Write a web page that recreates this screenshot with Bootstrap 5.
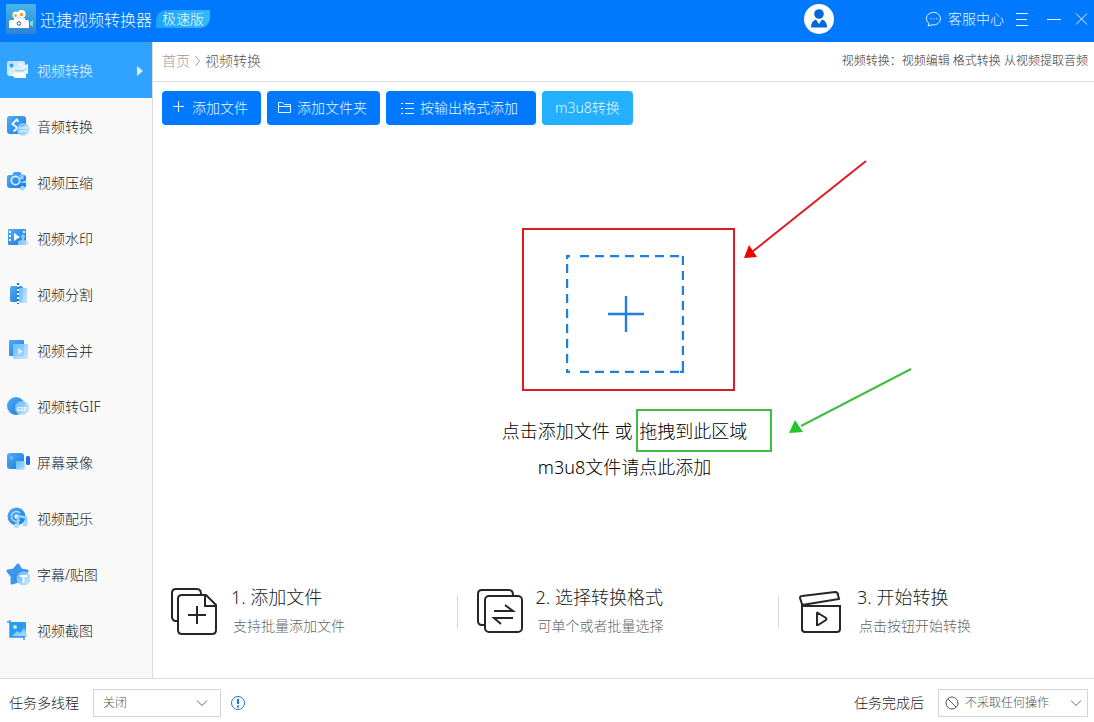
<!DOCTYPE html>
<html lang="zh-CN">
<head>
<meta charset="utf-8">
<meta name="viewport" content="width=device-width, initial-scale=1">
<title>迅捷视频转换器</title>
<link href="https://cdn.jsdelivr.net/npm/bootstrap@5.3.0/dist/css/bootstrap.min.css" rel="stylesheet">
<style>
body{font-family:"Noto Sans","Noto Sans CJK SC",sans-serif;font-size:14px;font-weight:300;line-height:20px;color:#222;background:#fff}
svg{display:block;flex-shrink:0}
a{text-decoration:none}
.fs-12{font-size:12px}
.titlebar{background:#0079ff;height:42px;padding:0 6px;color:#f2faff}
.titlebar h1{font-size:16px;line-height:20px;font-weight:300;margin:0 0 2px}
.titlebar a,.titlebar button{color:#e6f4ff}
.titlebar a{gap:6px}
.plain{border:0;background:none;padding:0}
.edition{background:linear-gradient(90deg,#1da4fb,#35b8fa);border-radius:10px 0 10px 0;padding:0 6px;line-height:18px;margin:0 0 4px 4px}
.account{margin-right:92px}
.side{width:153px;background:#f9f9f9;border-right:1px solid #dcdcdc}
.side .nav-link{height:56px;padding:2px 9px 0 6px;color:#222;gap:7px}
.side .nav-link.active{background:#30a2ff;color:#f2faff}
.crumbs{height:40px;padding:0 6px 2px 9px;border-bottom:1px solid #dcdcdc}
.crumbs .home{color:#999}
.crumbs .here{color:#555}
.crumbs .fs-12,.crumbs .fs-12 a{color:#333}
.tools{padding:9px 9px 0;gap:6px}
.tools .btn{height:34px;padding:0 13px 0 11px;font-size:14px;font-weight:300;line-height:20px;border:0;border-radius:4px;background:#0079ff;color:#e8f6ff;gap:8px}
.tools .btn.indent{padding:0 18px 0 14px;gap:6px}
.tools .btn.folder{gap:6px}
.tools .btn.light{background:#22b0ff;padding:0 13px}
.stage{padding-top:30px;padding-left:2px}
.drop{width:248px}
.hint{font-size:18px;line-height:36px;color:#000}
.hint a{color:#000}
.hint span{margin-left:2px}
.marks{position:absolute;left:0;top:0;pointer-events:none;overflow:visible}
.steps{padding-bottom:38px}
.step{flex:305 1 0;padding-left:17px;gap:13px}
.step + .step{flex-grow:321;padding-left:20px}
.step + .step + .step{flex-grow:315}
.step + .step::before{content:"";position:absolute;left:0;top:11px;height:34px;border-left:1px solid #d8d8d8}
.step h2{font-size:18px;line-height:26px;font-weight:300;margin:0 0 2px;color:#222}
.step p{margin:0 0 0 2px;line-height:28px;color:#666}
.bottom{height:44px;border-top:1px solid #dcdcdc;padding:4px 6px 0 9px}
.bottom label{margin-right:14px}
.pick{height:28px;border:1px solid #d5d5d5;border-radius:0;padding:0 26px 0 9px;font-size:12px;font-weight:300;line-height:20px;color:#555;background-image:url("data:image/svg+xml,%3Csvg xmlns='http://www.w3.org/2000/svg' viewBox='0 0 12 12'%3E%3Cpath d='M1 3.5l5 5 5-5' fill='none' stroke='%23666'/%3E%3C/svg%3E");background-size:12px 12px;background-position:right 12px center}
.threads{width:128px}
.after{width:150px;padding-left:26px;background-position:right 5px center}
.after-icon{position:absolute;left:7px;top:7px}
.b{fill:url(#gb)}.l{fill:url(#gl);fill-opacity:.88}
</style>
</head>
<body>
<svg width="0" height="0" class="position-absolute" aria-hidden="true"><defs>
<linearGradient id="gb" x1="0" y1="0" x2="1" y2="1"><stop offset="0" stop-color="#55adf6"/><stop offset="1" stop-color="#1777df"/></linearGradient>
<linearGradient id="gl" x1="0" y1="0" x2="1" y2="1"><stop offset="0" stop-color="#74c3fb"/><stop offset="1" stop-color="#bfe6ff"/></linearGradient>
<linearGradient id="gw" x1="0" y1="0" x2="1" y2="1"><stop offset="0" stop-color="#b5ddff"/><stop offset="1" stop-color="#fff"/></linearGradient>
<linearGradient id="logo" x1="0" y1="0" x2="0" y2="1"><stop offset="0" stop-color="#46b6ea"/><stop offset="1" stop-color="#2f83d5"/></linearGradient>
</defs></svg>
<div class="d-flex flex-column min-vh-100">
<header class="titlebar d-flex align-items-center">
  <svg width="30" height="30" viewBox="0 0 30 30" class="me-1 mb-1"><rect width="30" height="30" rx="1" fill="url(#logo)"/><path d="M3 24V18q0-2 2-2h16q2 0 2 2v6z" fill="#fff"/><circle cx="10" cy="11" r="3.500" fill="#fff"/><circle cx="15.500" cy="10" r="4" fill="#fff"/><circle cx="9.500" cy="11.500" r="1.500" fill="#e8a12a"/><circle cx="15.500" cy="10.500" r="1.700" fill="#e8a12a"/><path d="M8 14h11v4H8z" fill="#fff"/><circle cx="13" cy="19.500" r="1.800" fill="#fff" stroke="#345b80"/><path d="M24 18l3-2v7l-3-2z" fill="#67e2e5"/></svg>
  <h1>迅捷视频转换器</h1><span class="edition">极速版</span>
  <button class="plain account ms-auto mb-1" aria-label="账户"><svg width="30" height="30" viewBox="0 0 30 30"><circle cx="15" cy="15" r="15" fill="#fff"/><circle cx="15" cy="10" r="4.800" fill="#0868d8"/><path d="M7 23.500q0-6.500 5-8l3 4.500 3-4.500q5 1.500 5 8z" fill="#0868d8"/></svg></button>
  <a href="#" class="d-flex align-items-center mb-1"><svg width="16" height="16" viewBox="0 0 16 16" fill="none" stroke="currentColor"><path d="M3 12.500A7 6.300 0 1 1 6 13.800L2 15z"/><path d="M4.500 7.700h1M7.500 7.700h1M10.500 7.700h1" stroke-width="1.300"/></svg>客服中心</a>
  <button class="plain ms-2 ps-1 mb-1" aria-label="菜单"><svg width="12" height="14" viewBox="0 0 12 14" stroke="currentColor"><path d="M0 1.500h12M0 7.500h11M0 13.500h12"/></svg></button>
  <button class="plain ms-3 mb-1" aria-label="最小化"><svg width="18" height="14" viewBox="0 0 18 14" stroke="currentColor"><path d="M3 7.500h14"/></svg></button>
  <button class="plain ms-2 ps-1 mb-1" aria-label="关闭窗口"><svg width="14" height="12" viewBox="0 0 14 12" stroke="currentColor" fill="none"><path d="M2 .5l11 11M13 .5l-11 11"/></svg></button>
</header>
<div class="d-flex flex-grow-1">
<nav class="side nav flex-column flex-nowrap flex-shrink-0">
  <a class="nav-link active d-flex align-items-center" href="#"><svg width="24" height="24" viewBox="0 0 24 24"><path d="M3 2h14q2 0 2 2v2l3-1v10l-3-1q0 3-2 3H4q-3 0-3-3V4q0-2 2-2z" fill="url(#gw)"/><circle cx="5.500" cy="6.500" r="2" fill="#319cf6"/><path d="M13 6V4l5 3.500h4M11 16.500H6l4-4v2h10V19H9l-3-2.500" fill="#fff"/><path d="M9 11.800h9l3-3" stroke="#72bff9" fill="none"/></svg>视频转换<svg class="ms-auto" width="6" height="10" viewBox="0 0 6 10"><path d="M0 0l6 5-6 5z" fill="#d9eeff"/></svg></a>
  <a class="nav-link d-flex align-items-center" href="#"><svg width="24" height="24" viewBox="0 0 24 24"><rect x="1" y="1" width="19" height="18" rx="3" class="b"/><path d="M11 4L6.500 9l5 4-4 3.500M11 4l1 3" fill="none" stroke="#fff" stroke-width="1.800"/><circle cx="17" cy="14.500" r="6.500" class="l"/><path d="M13.500 13h7l-2-2M20.500 16h-7l2 2" stroke="#fff" fill="none"/></svg>音频转换</a>
  <a class="nav-link d-flex align-items-center" href="#"><svg width="24" height="24" viewBox="0 0 24 24"><path d="M3 4h3l2-3h6l2 3h2q2 0 2 2v8q0 3-3 3H4q-3 0-3-3V6q0-2 2-2z" class="b"/><circle cx="9.500" cy="9.500" r="4.200" fill="none" stroke="#d7efff" stroke-width="1.700"/><path d="M13.500 4l3 3M17 4v3.500h-3.500z" stroke="#8bd0ff" stroke-width="1.300" fill="#8bd0ff"/><path d="M14 12h8l-3-2.500zM13 17.500l3.500-3 3 2.500-3 3z" fill="#a2d9ff"/></svg>视频压缩</a>
  <a class="nav-link d-flex align-items-center" href="#"><svg width="24" height="24" viewBox="0 0 24 24"><rect x="2" y="2" width="18" height="16" rx="1" class="b"/><path d="M3 4h2v2H3zM3 8h2v2H3zM3 12h2v2H3zM17 4h2v2h-2zM8 6l6 4-6 4z" fill="#fff"/><path d="M15 8q3-2 4 1l-1 4 4 1v4H12v-4l4-1z" class="l"/></svg>视频水印</a>
  <a class="nav-link d-flex align-items-center" href="#"><svg width="24" height="24" viewBox="0 0 24 24"><rect x="4" y="3" width="13" height="16" rx="2" class="b"/><rect x="12" y="5" width="9" height="15" rx="1" class="l"/><path d="M12 0v21" stroke="#e8f6ff" stroke-width="2"/><path d="M12 0v21" stroke="#1678d8" stroke-width="2" stroke-dasharray="2 2"/></svg>视频分割</a>
  <a class="nav-link d-flex align-items-center" href="#"><svg width="24" height="24" viewBox="0 0 24 24"><rect x="3" y="1" width="15" height="16" rx="1" class="b"/><rect x="7" y="5" width="15" height="15" rx="1" class="l"/><path d="M12 9l5 3.500-5 3.500z" fill="#d8f0ff"/></svg>视频合并</a>
  <a class="nav-link d-flex align-items-center" href="#"><svg width="24" height="24" viewBox="0 0 24 24"><circle cx="10" cy="11" r="9" class="b"/><circle cx="16" cy="13" r="7" class="l"/><text x="10.500" y="15.500" font-size="6" font-weight="700" fill="#fff">GIF</text></svg>视频转GIF</a>
  <a class="nav-link d-flex align-items-center" href="#"><svg width="24" height="24" viewBox="0 0 24 24"><rect x="1" y="2" width="17" height="16" rx="3" class="b"/><rect x="20" y="5" width="4" height="9" rx="1.500" fill="#146fd9"/><circle cx="5.500" cy="7" r="1.700" fill="#75bff8"/><rect x="10" y="10" width="9" height="9" rx="1" class="l"/></svg>屏幕录像</a>
  <a class="nav-link d-flex align-items-center" href="#"><svg width="24" height="24" viewBox="0 0 24 24"><circle cx="10.500" cy="9.500" r="9" class="b"/><path d="M14 6a5 5 0 1 0 0 7" fill="none" stroke="#b9e0fd" stroke-width="1.300"/><circle cx="10.500" cy="9.500" r="2.200" fill="#e8f6ff"/><path d="M12 9l8 1.500v7M12 9v9" fill="none" stroke="#91d1fc" stroke-width="2.500"/><circle cx="10.500" cy="18.500" r="2.500" fill="#a6daff"/><circle cx="19" cy="17" r="2.500" fill="#a6daff"/></svg>视频配乐</a>
  <a class="nav-link d-flex align-items-center" href="#"><svg width="24" height="24" viewBox="0 0 24 24"><path d="M12 2l3 5 6 1-4 5 1 6-6-1-6 2V13L2 8l6-1z" class="b" stroke="#3e97ed" stroke-width="3" stroke-linejoin="round"/><circle cx="17.500" cy="15.500" r="7" class="l"/><path d="M14 13h7M17.500 13v7" stroke="#fff" stroke-width="2"/></svg>字幕/贴图</a>
  <a class="nav-link d-flex align-items-center" href="#"><svg width="24" height="24" viewBox="0 0 24 24"><rect x="4" y="3" width="16" height="15" rx="1" fill="#269cf5"/><path d="M4 1v17h14v3M1 3h3" fill="none" stroke="#2d9cf0" stroke-width="1.500"/><circle cx="9" cy="8" r="2" fill="#bce7ff"/><path d="M6 17l5-5 3 2 4-5 4 8z" class="l"/></svg>视频截图</a>
</nav>
<main class="d-flex flex-column flex-grow-1">
  <div class="crumbs d-flex align-items-center justify-content-between">
    <div class="d-flex align-items-center"><a href="#" class="home">首页</a><svg width="15" height="12" viewBox="0 0 15 12"><path d="M5.500 1l4 5-4 5" fill="none" stroke="#999"/></svg><span class="here">视频转换</span></div>
    <div class="fs-12">视频转换：<a href="#">视频编辑</a> <a href="#">格式转换</a> <a href="#">从视频提取音频</a></div>
  </div>
  <div class="tools d-flex flex-wrap">
    <button class="btn d-flex align-items-center"><svg width="11" height="14" viewBox="0 0 11 14" stroke="currentColor"><path d="M0 5.500h11M5.500 0v11"/></svg>添加文件</button>
    <button class="btn folder d-flex align-items-center"><svg width="13" height="14" viewBox="0 0 13 14" fill="none" stroke="currentColor"><path d="M.5 11.500v-10h4l2 2h6v8zM.5 5.500h12"/></svg>添加文件夹</button>
    <button class="btn indent d-flex align-items-center"><svg width="14" height="14" viewBox="0 0 14 14" stroke="currentColor"><path d="M1 2.500h2M5 2.500h9M1 7.500h2M5 7.500h9M1 12.500h2M5 12.500h9"/></svg>按输出格式添加</button>
    <button class="btn light">m3u8转换</button>
  </div>
  <section class="stage flex-grow-1 d-flex flex-column align-items-center justify-content-center">
    <div class="drop position-relative d-flex flex-column align-items-center">
      <button class="plain" aria-label="添加文件"><svg width="118" height="118" viewBox="0 0 118 118" fill="none" stroke="#1d7fe0" stroke-width="2.400"><path d="M1 4V1h3M14 1h100M1 9v105M117 1v113M1 114v3h3M14 117h100M114 117h3v-3" stroke-dasharray="9 6"/><path d="M60 41v36M42 59h36"/></svg></button>
      <div class="hint text-center text-nowrap mt-4 pt-3"><a href="#">点击添加文件</a> 或 <span>拖拽到此区域</span><br><a href="#">m3u8文件请点此添加</a></div>
      <svg class="marks" width="248" height="230" viewBox="0 0 248 230" fill="none" stroke-width="2" aria-hidden="true">
        <g stroke="#df1a22"><rect x="22" y="-26" width="211" height="161"/><path d="M365-94L251-3"/><path d="M243 3l5-13 8 12z" fill="#f00000" stroke="none"/></g>
        <g stroke="#40bd43"><rect x="136" y="155" width="134" height="41"/><path d="M410 114l-110 57"/><path d="M288 178l6-13 8 12z" fill="#26c52c" stroke="none"/></g>
      </svg>
    </div>
  </section>
  <section class="steps d-flex">
    <div class="step d-flex position-relative">
      <svg width="48" height="56" viewBox="0 0 48 56" fill="none" stroke="#262626" stroke-width="2"><path d="M7 37H5q-3-1-3-4V9q0-4 4-4h21q4 0 4 5M36 11H12q-4 0-4 4v31q0 4 4 4h30q4 0 4-4V21zM35 11v11h11"/><path d="M27 22v18M18 31h18"/></svg>
      <div><h2>1. 添加文件</h2><p>支持批量添加文件</p></div></div>
    <div class="step d-flex position-relative">
      <svg width="46" height="56" viewBox="0 0 46 56" fill="none" stroke="#262626" stroke-width="2"><path d="M8 41H5q-4 0-4-4V10q0-4 4-4h27q4 0 4 5"/><rect x="8" y="12" width="37" height="36" rx="4"/><path d="M17 27h19l-8-6M36 34H17l7 6"/></svg>
      <div><h2>2. 选择转换格式</h2><p>可单个或者批量选择</p></div></div>
    <div class="step d-flex position-relative">
      <svg width="46" height="56" viewBox="0 0 46 56" fill="none" stroke="#262626" stroke-width="2"><path d="M4 20l-2-6q0-2 2-2l33-4q3 0 3 3l1 4-37 6zM4 22h38v23q0 3-3 3H7q-3 0-3-3z"/><path d="M19 29q0-1 1 0l8 5q1 1 0 2l-8 5h-1z"/></svg>
      <div><h2>3. 开始转换</h2><p>点击按钮开始转换</p></div></div>
  </section>
</main>
</div>
<footer class="bottom d-flex align-items-center">
  <label for="threads">任务多线程</label>
  <select id="threads" class="form-select pick threads me-2"><option>关闭</option></select>
  <button class="plain" aria-label="说明"><svg width="18" height="16" viewBox="0 0 18 16" fill="none" stroke="#1b76d1"><circle cx="9" cy="8" r="6.500"/><path d="M9 4v5M9 10.500v2" stroke-width="2"/></svg></button>
  <label for="after" class="ms-auto">任务完成后</label>
  <div class="position-relative"><svg class="after-icon" width="14" height="14" viewBox="0 0 14 14" fill="none" stroke="#555"><circle cx="7" cy="7" r="6"/><path d="M3 3l8 8"/></svg>
  <select id="after" class="form-select pick after"><option>不采取任何操作</option></select></div>
</footer>
</div>
<script src="https://cdn.jsdelivr.net/npm/bootstrap@5.3.0/dist/js/bootstrap.bundle.min.js"></script>
</body>
</html>
